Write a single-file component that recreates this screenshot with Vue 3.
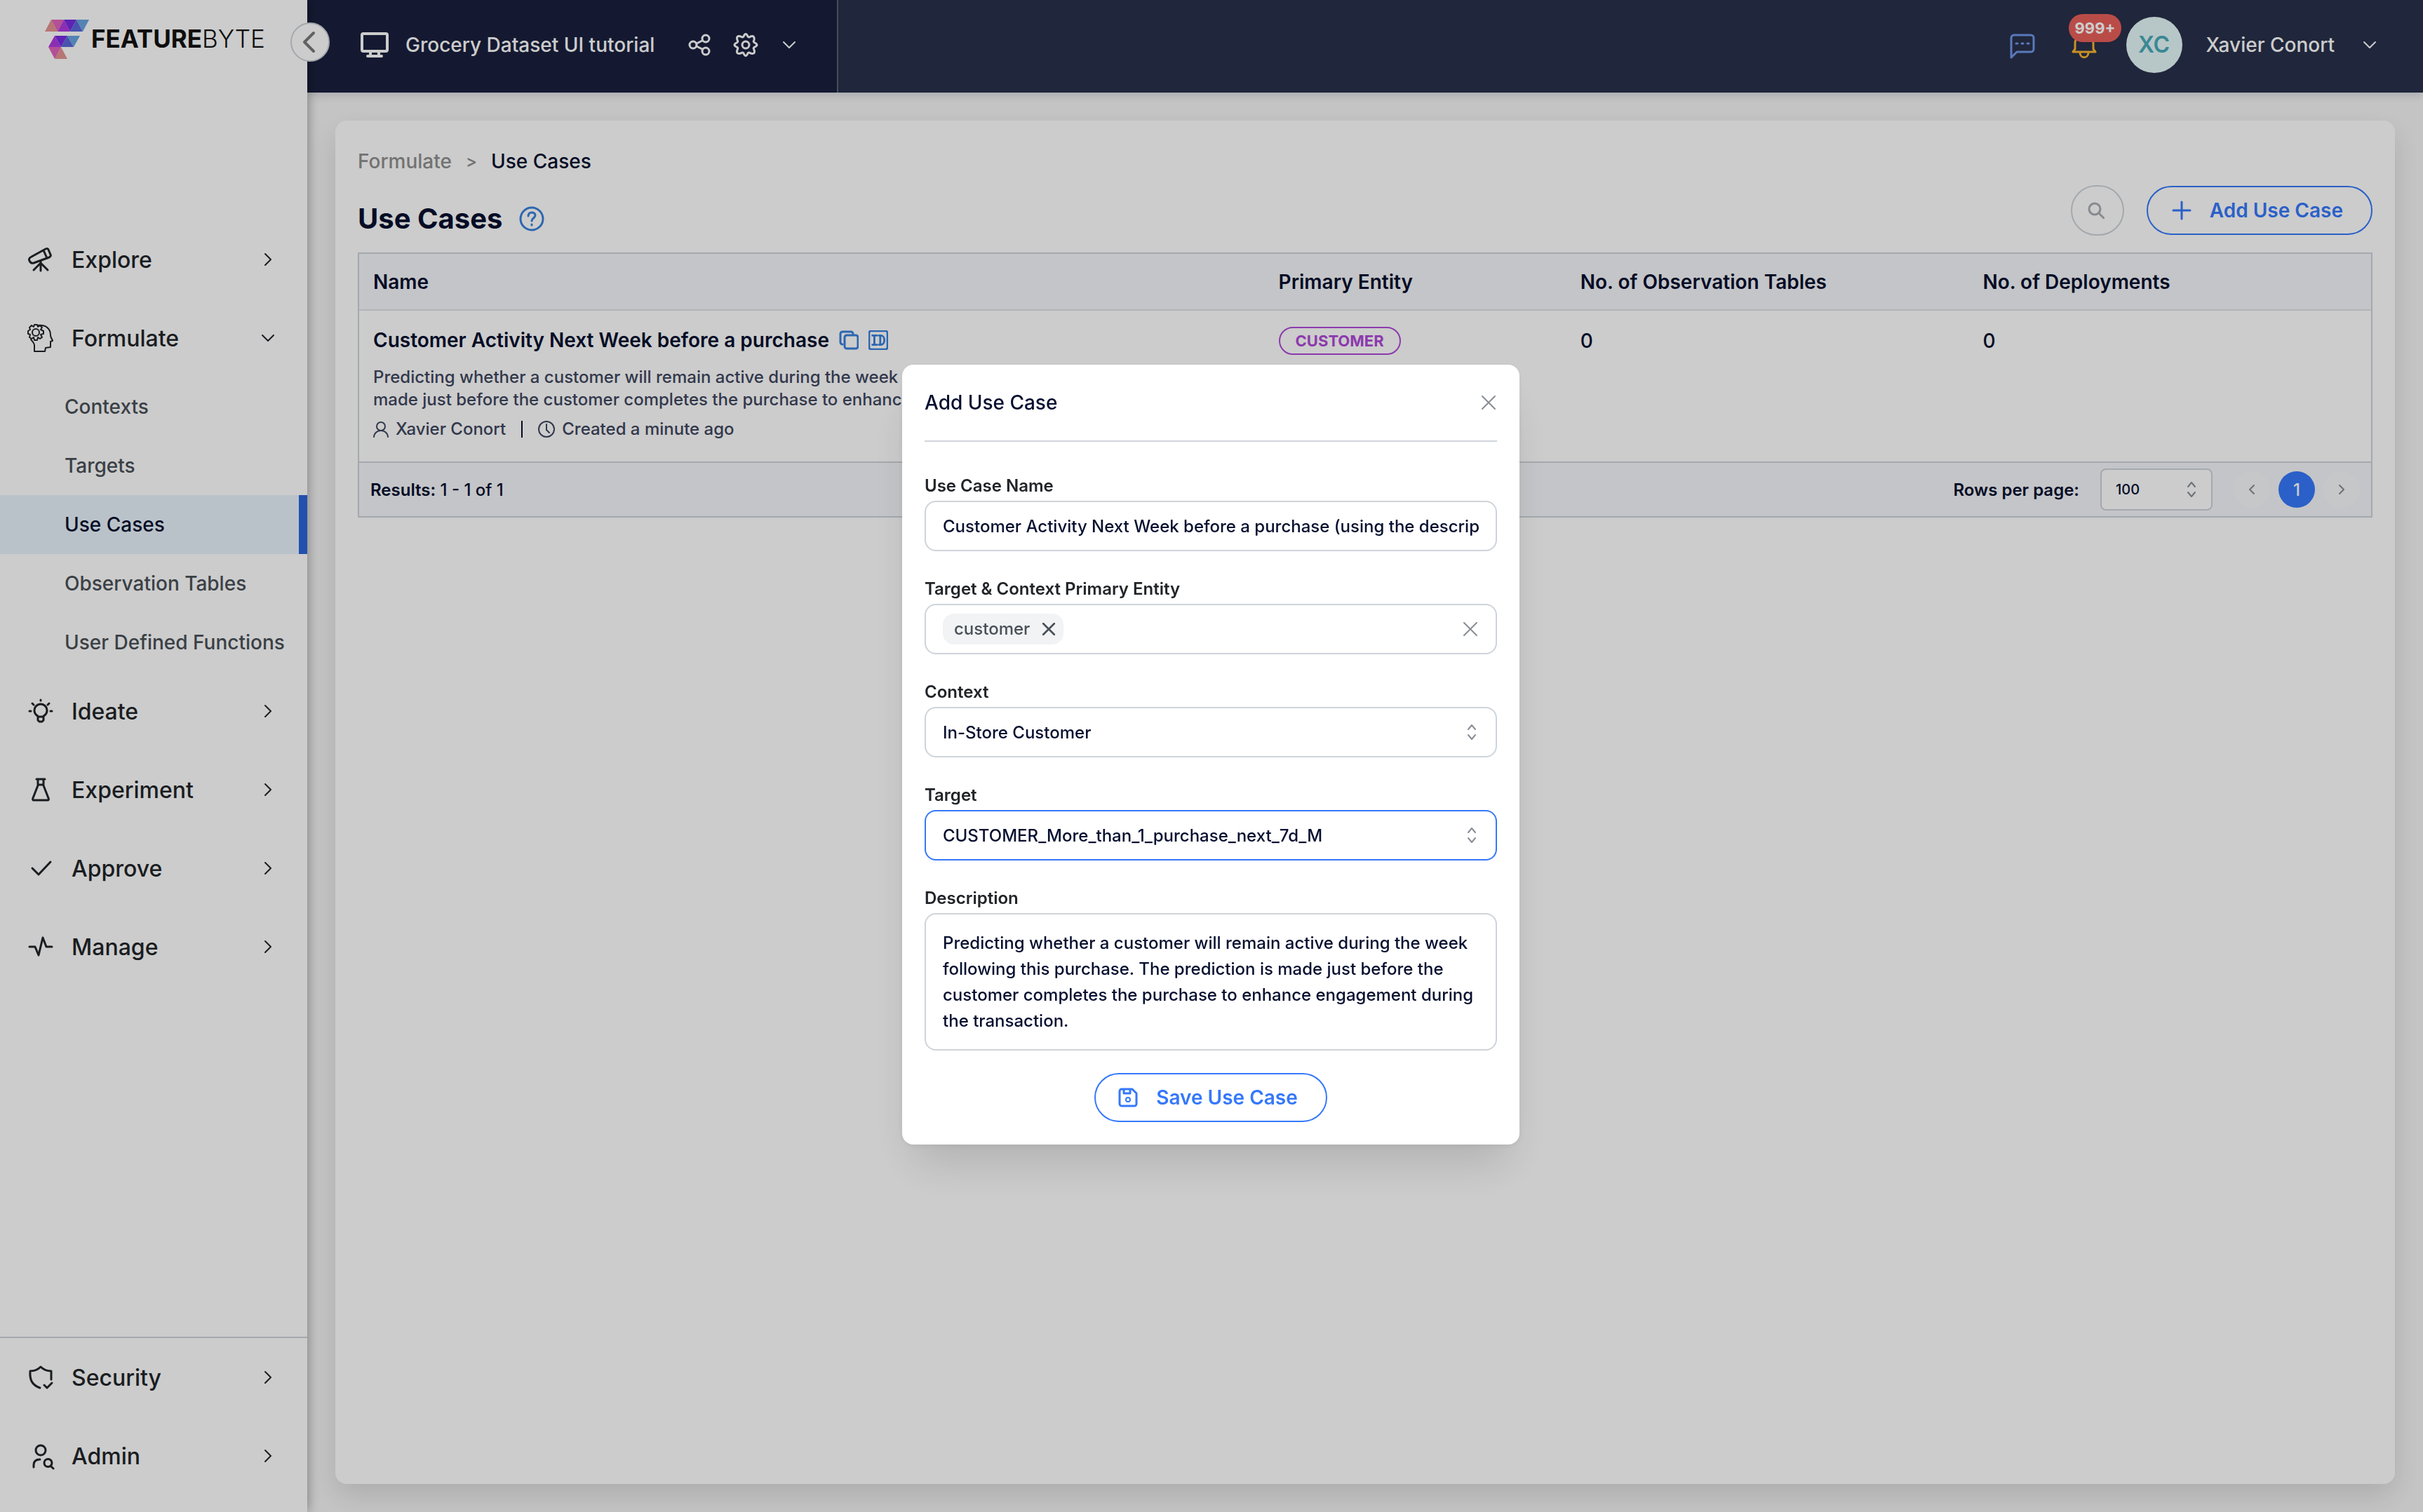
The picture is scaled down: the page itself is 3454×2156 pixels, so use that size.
<template>
  <div class="layout">
    <!-- Sidebar -->
    <aside class="sidebar">
      <a href="#" class="logo">
        <svg class="logo-mark" viewBox="0 0 64 56">
          <path fill="#e59491" d="M9 0 18 17H0zM23 39 32 56H14z" />
          <path fill="#e065bc" d="M9 0H27L18 17zM5 39H23L14 56z" />
          <path fill="#b03ae0" d="M27 0 36 17H18zM14 23 23 39H5z" />
          <path fill="#762ce0" d="M27 0H45L36 17zM14 23H32L23 39z" />
          <path fill="#5a68da" d="M45 0 54 17H36zM32 23 41 39H23z" />
          <path fill="#68a5e0" d="M45 0H63L54 17zM32 23H50L41 39z" />
        </svg>
        <span class="logo-text"><b>FEATURE</b>BYTE</span>
      </a>
      <button type="button" class="collapse-btn" aria-label="Collapse menu">
        <svg viewBox="0 0 32 32"><path d="M21 3 8 16l13 13" /></svg>
      </button>

      <nav class="menu">
        <template v-for="item in mainMenu" :key="item.label">
          <button type="button" class="menu-item">
            <svg class="menu-icon" :class="{ thin: item.thin }" viewBox="0 0 40 40">
              <path v-for="d in item.paths" :key="d" :d="d" />
            </svg>
            <span class="menu-label">{{ item.label }}</span>
            <svg class="chevron" viewBox="0 0 24 24">
              <path :d="item.children ? 'M4 8l8 8 8-8' : 'M8 4l8 8-8 8'" />
            </svg>
          </button>
          <div v-if="item.children" class="submenu">
            <a
              v-for="child in item.children"
              :key="child"
              href="#"
              class="submenu-item"
              :class="{ active: child === activePage }"
            >{{ child }}</a>
          </div>
        </template>
      </nav>

      <nav class="menu menu-bottom">
        <button v-for="item in bottomMenu" :key="item.label" type="button" class="menu-item">
          <svg class="menu-icon" viewBox="0 0 40 40">
            <path v-for="d in item.paths" :key="d" :d="d" />
          </svg>
          <span class="menu-label">{{ item.label }}</span>
          <svg class="chevron" viewBox="0 0 24 24"><path d="M8 4l8 8-8 8" /></svg>
        </button>
      </nav>
    </aside>

    <div class="content">
      <!-- Header -->
      <header class="header">
        <div class="project">
          <svg class="icon-monitor" viewBox="0 0 40 36">
            <path d="M4 2h32a2 2 0 0 1 2 2v21a2 2 0 0 1-2 2H4a2 2 0 0 1-2-2V4a2 2 0 0 1 2-2zM14 28v5M26 28v5M10 34h20" />
          </svg>
          <span class="project-name">Grocery Dataset UI tutorial</span>
          <button type="button" class="icon-btn share" aria-label="Share">
            <svg viewBox="0 0 32 32">
              <circle cx="7" cy="16" r="5" /><circle cx="25" cy="7" r="5" /><circle cx="25" cy="25" r="5" />
              <path d="M12 14l8-4M12 18l8 4" />
            </svg>
          </button>
          <button type="button" class="icon-btn gear" aria-label="Settings">
            <svg viewBox="0 0 36 36">
              <circle cx="18" cy="18" r="5" />
              <path d="M15 6Q18 -1 21 6Q22 8 25 6Q31 4 30 11Q28 14 31 15Q37 18 31 21Q28 22 30 25Q32 32 25 30Q22 28 21 30Q18 37 15 30Q14 28 11 30Q4 32 6 25Q8 22 5 21Q-1 18 5 15Q8 14 6 11Q4 4 11 6Q14 8 15 6z" />
            </svg>
          </button>
          <button type="button" class="icon-btn down" aria-label="Switch catalog">
            <svg viewBox="0 0 24 24"><path d="M4 8l8 8 8-8" /></svg>
          </button>
        </div>
        <div class="account">
          <button type="button" class="icon-btn chat" aria-label="Messages">
            <svg viewBox="0 0 36 36">
              <path d="M6 2h24a4 4 0 0 1 4 4v16a4 4 0 0 1-4 4H10l-8 8V6a4 4 0 0 1 4-4zM9 14h2M17 14h2M25 14h2" />
            </svg>
          </button>
          <button type="button" class="icon-btn bell" aria-label="Notifications">
            <svg viewBox="0 0 36 36">
              <path d="M2 26l3-4V14C5 6 11 2 18 2s13 4 13 12v8l3 4zM12 27c0 9 12 9 12 0" />
            </svg>
            <span class="badge">999+</span>
          </button>
          <span class="avatar">XC</span>
          <span class="user-name">Xavier Conort</span>
          <button type="button" class="icon-btn down" aria-label="Account menu">
            <svg viewBox="0 0 24 24"><path d="M4 8l8 8 8-8" /></svg>
          </button>
        </div>
      </header>

      <!-- Page -->
      <main class="card">
        <div class="breadcrumb">
          <a href="#">Formulate</a>
          <span class="sep">&gt;</span>
          <span class="current">Use Cases</span>
        </div>
        <div class="title-row">
          <h1>
            Use Cases
            <svg class="icon-help" viewBox="0 0 36 36">
              <circle cx="18" cy="18" r="16" />
              <path d="M13 14c0-7 10-6 10-1 0 4-5 4-5 8M18 26v1" />
            </svg>
          </h1>
          <button type="button" class="search-btn" aria-label="Search">
            <svg viewBox="0 0 24 24"><circle cx="10" cy="10" r="8" /><path d="M16 16l7 7" /></svg>
          </button>
          <button type="button" class="outline-btn add-btn">
            <svg viewBox="0 0 28 28"><path d="M14 2v24M2 14h24" /></svg>
            Add Use Case
          </button>
        </div>

        <div class="table-box">
          <table>
            <thead>
              <tr>
                <th class="col-name">Name</th>
                <th class="col-entity">Primary Entity</th>
                <th class="col-count">No. of Observation Tables</th>
                <th>No. of Deployments</th>
              </tr>
            </thead>
            <tbody>
              <tr v-for="row in rows" :key="row.name">
                <td>
                  <div class="row-name">
                    <span>{{ row.name }}</span>
                    <svg class="icon-copy" viewBox="0 0 28 28">
                      <path d="M5 20a3 3 0 0 1-3-3V5a3 3 0 0 1 3-3h12a3 3 0 0 1 3 3" />
                      <rect x="8" y="7" width="19" height="19" rx="3" />
                    </svg>
                    <svg class="icon-id" viewBox="0 0 30 30">
                      <rect x="1" y="1" width="28" height="28" rx="3" />
                      <path d="M6 8h7M9 8v14M6 22h7M18 8v14M16 8h3c7 0 7 14 0 14h-3" />
                    </svg>
                  </div>
                  <p class="row-desc">{{ row.description }}</p>
                  <div class="row-meta">
                    <svg class="icon-person" viewBox="0 0 22 24">
                      <circle cx="11" cy="8" r="6" /><path d="M1 23c1-12 19-12 20 0" />
                    </svg>
                    <span>{{ row.author }}</span>
                    <i class="bar"></i>
                    <svg class="icon-clock" viewBox="0 0 24 24">
                      <circle cx="12" cy="12" r="11" /><path d="M12 5v8l4 4" />
                    </svg>
                    <span>{{ row.created }}</span>
                  </div>
                </td>
                <td><span class="tag">{{ row.entity }}</span></td>
                <td class="count">{{ row.tables }}</td>
                <td class="count">{{ row.deployments }}</td>
              </tr>
            </tbody>
          </table>
          <div class="table-footer">
            <span class="results"><b>Results:</b> 1 - 1 of 1</span>
            <label class="rows-label" for="rows">Rows per page:</label>
            <div class="select-box rows-select">
              <select id="rows" v-model="rowsPerPage">
                <option>50</option>
                <option>100</option>
              </select>
              <svg class="icon-updown" viewBox="0 0 16 24"><path d="M3 8l5-6 5 6M3 16l5 6 5-6" /></svg>
            </div>
            <div class="pager">
              <button type="button" aria-label="Previous page">
                <svg viewBox="0 0 20 20"><path d="M13 4l-6 6 6 6" /></svg>
              </button>
              <button type="button" class="current-page">1</button>
              <button type="button" aria-label="Next page">
                <svg viewBox="0 0 20 20"><path d="M7 4l6 6-6 6" /></svg>
              </button>
            </div>
          </div>
        </div>
      </main>
    </div>

    <!-- Modal -->
    <div v-if="showModal" class="overlay">
      <form class="modal" role="dialog" aria-labelledby="modal-title" @submit.prevent="showModal = false">
        <div class="modal-header">
          <h2 id="modal-title">Add Use Case</h2>
          <button type="button" class="close-btn" aria-label="Close" @click="showModal = false">
            <svg viewBox="0 0 20 20"><path d="M1 1l18 18M19 1 1 19" /></svg>
          </button>
        </div>

        <div class="form-group">
          <label for="name">Use Case Name</label>
          <input id="name" v-model="form.name" type="text" class="control">
        </div>
        <div class="form-group">
          <label for="entity">Target &amp; Context Primary Entity</label>
          <div class="control tags">
            <span v-for="entity in form.entities" :key="entity" class="chip">
              {{ entity }}
              <button type="button" :aria-label="'Remove ' + entity" @click="removeEntity(entity)">
                <svg viewBox="0 0 20 20"><path d="M1 1l18 18M19 1 1 19" /></svg>
              </button>
            </span>
            <input id="entity" type="text" class="tag-input">
            <button type="button" class="close-btn" aria-label="Clear" @click="form.entities = []">
              <svg viewBox="0 0 20 20"><path d="M1 1l18 18M19 1 1 19" /></svg>
            </button>
          </div>
        </div>
        <div class="form-group">
          <label for="context">Context</label>
          <div class="select-box">
            <select id="context" v-model="form.context" class="control">
              <option>In-Store Customer</option>
            </select>
            <svg class="icon-updown" viewBox="0 0 16 24"><path d="M3 8l5-6 5 6M3 16l5 6 5-6" /></svg>
          </div>
        </div>
        <div class="form-group">
          <label for="target">Target</label>
          <div class="select-box">
            <select id="target" v-model="form.target" class="control focused">
              <option>CUSTOMER_More_than_1_purchase_next_7d_M</option>
            </select>
            <svg class="icon-updown" viewBox="0 0 16 24"><path d="M3 8l5-6 5 6M3 16l5 6 5-6" /></svg>
          </div>
        </div>
        <div class="form-group">
          <label for="description">Description</label>
          <textarea id="description" v-model="form.description" class="control" rows="4"></textarea>
        </div>

        <button type="submit" class="outline-btn save-btn">
          <svg viewBox="0 0 28 28">
            <path d="M5 2h15l6 6v15a3 3 0 0 1-3 3H5a3 3 0 0 1-3-3V5a3 3 0 0 1 3-3zM8 2v6h9V2" />
            <circle cx="14" cy="17" r="3" />
          </svg>
          Save Use Case
        </button>
      </form>
    </div>
  </div>
</template>

<script setup>
import { reactive, ref } from "vue";

const description =
  "Predicting whether a customer will remain active during the week following this purchase. The prediction is made just before the customer completes the purchase to enhance engagement during the transaction.";

// Sidebar
const activePage = ref("Use Cases");
const mainMenu = [
  {
    label: "Explore",
    paths: [
      "M27 5 7 16c-4 2-4 4-3 6s3 4 6 3l22-8c2-1 3-2 2-4l-3-7c-1-2-2-2-4-1z",
      "M24 7l5 11M20 22v14M20 25 10 35M20 25l10 10",
    ],
  },
  {
    label: "Formulate",
    thin: true,
    paths: [
      "M11 1h4l1 3 3-2 3 3-2 3 4 2v4l-4 1 2 4-3 2-3-2-1 4h-4l-1-4-3 2-3-2 1-4-3-1v-4l3-2-1-3 3-3 3 2z",
      "M8 12a5 5 0 1 0 10 0a5 5 0 1 0-10 0",
      "M16 2c11-1 18 4 18 14 0 4 3 6 3 8l-3 1v8l-7 1-1 5H11V30c0-3-3-5-5-8",
    ],
    children: ["Contexts", "Targets", "Use Cases", "Observation Tables", "User Defined Functions"],
  },
  {
    label: "Ideate",
    paths: [
      "M16 29v-2a9 9 0 1 1 8 0v2M16 28h8v5l-2 2h-4l-2-2z",
      "M20 4v1M4 20h2M34 20h2M8 9l2 2M32 9l-2 2",
    ],
  },
  { label: "Experiment", paths: ["M14 5h12M16 5v9L9 32c-1 2 0 3 1 3h20c1 0 2-1 1-3L24 14V5M16 13h8"] },
  { label: "Approve", paths: ["M8 20l9 9 17-18"] },
  { label: "Manage", paths: ["M4 20h8l5 12 6-25 5 13h8"] },
];
const bottomMenu = [
  {
    label: "Security",
    paths: ["M19 35C8 31 4 24 5 11c6 0 10-1 15-6 4 4 9 6 15 6v12", "M25 31l4 4 7-7"],
  },
  {
    label: "Admin",
    paths: [
      "M13 12a7 7 0 1 0 14 0a7 7 0 1 0-14 0",
      "M10 36v-3c0-5 3-8 9-8",
      "M25 30a5 5 0 1 0 11 0a5 5 0 1 0-11 0M34 34l4 4",
    ],
  },
];

// Table
const rowsPerPage = ref("100");
const rows = ref([
  {
    name: "Customer Activity Next Week before a purchase",
    description,
    author: "Xavier Conort",
    created: "Created a minute ago",
    entity: "CUSTOMER",
    tables: 0,
    deployments: 0,
  },
]);

// Form
const showModal = ref(true);
const form = reactive({
  name: "Customer Activity Next Week before a purchase (using the description)",
  entities: ["customer"],
  context: "In-Store Customer",
  target: "CUSTOMER_More_than_1_purchase_next_7d_M",
  description,
});
const removeEntity = (entity) => {
  form.entities = form.entities.filter((e) => e !== entity);
};
</script>

<style>
body {
  margin: 0;
  background: #f6f6f6;
}
</style>

<style scoped>
* {
  box-sizing: border-box;
}
.layout {
  display: flex;
  min-height: 100vh;
  background: #f6f6f6;
  color: #060f2f;
  font-family: Inter, sans-serif;
  font-size: 28px;
  font-weight: 500;
}
button,
input,
select,
textarea {
  margin: 0;
  padding: 0;
  border: none;
  background: none;
  color: inherit;
  font: inherit;
  outline: none;
}
button {
  cursor: pointer;
}
a {
  color: inherit;
  text-decoration: none;
}
svg {
  display: block;
  flex: none;
  fill: none;
  stroke: currentColor;
  stroke-width: 3;
  stroke-linecap: round;
  stroke-linejoin: round;
}
h1,
h2,
p {
  margin: 0;
}

/* Sidebar */
.sidebar {
  position: relative;
  z-index: 2;
  display: flex;
  flex-direction: column;
  flex: none;
  width: 438px;
  background: #fff;
  color: #212529;
  box-shadow: 0 0 16px rgba(0, 0, 0, 0.4);
}
.logo {
  display: flex;
  gap: 2px;
  height: 314px;
  padding: 28px 0 0 64px;
}
.logo-mark {
  width: 64px;
  height: 56px;
  stroke: none;
}
.logo-text {
  color: #121212;
  font-size: 35px;
  font-weight: 300;
  line-height: 54px;
}
.logo-text b {
  font-weight: 700;
}
.collapse-btn {
  position: absolute;
  top: 32px;
  right: -32px;
  display: flex;
  align-items: center;
  justify-content: center;
  width: 56px;
  height: 56px;
  border: 2px solid #ced4da;
  border-radius: 50%;
  background: #fff;
  color: #7a7a7a;
}
.collapse-btn svg {
  width: 32px;
  height: 32px;
  stroke-width: 4;
}
.menu {
  display: flex;
  flex-direction: column;
}
.menu-item {
  display: flex;
  align-items: center;
  gap: 24px;
  height: 112px;
  padding: 0 44px 0 38px;
  font-size: 32px;
  text-align: left;
}
.menu-icon {
  width: 40px;
  height: 40px;
}
.menu-icon.thin {
  stroke-width: 2;
}
.menu-label {
  flex: 1;
}
.chevron {
  width: 24px;
  height: 24px;
  stroke-width: 2;
}
.submenu-item {
  display: block;
  padding-left: 92px;
  color: #495057;
  line-height: 84px;
}
.submenu-item.active {
  border-right: 12px solid #2a64da;
  background: #e9f3fc;
  color: #060f2f;
}
.menu-bottom {
  margin-top: auto;
  padding-bottom: 24px;
  border-top: 2px solid #ced4da;
}

/* Header */
.content {
  display: flex;
  flex: 1;
  flex-direction: column;
  min-width: 0;
}
.header {
  display: flex;
  justify-content: space-between;
  height: 132px;
  background: #28304a;
  color: #fff;
  box-shadow: 0 4px 12px rgba(20, 30, 70, 0.15);
}
.project,
.account {
  display: flex;
  align-items: center;
  padding-bottom: 4px;
}
.project {
  padding-left: 76px;
  padding-right: 56px;
  border-right: 2px solid #5a6074;
  background: #1a203e;
}
.icon-monitor {
  width: 40px;
  height: 36px;
  margin-right: 24px;
  stroke-width: 4;
}
.icon-btn svg {
  width: 100%;
}
.share {
  width: 32px;
  margin-left: 48px;
}
.gear {
  width: 36px;
  margin: 0 32px;
}
.down {
  width: 24px;
}
.down svg {
  stroke-width: 2;
}
.account {
  padding-right: 64px;
}
.chat,
.bell {
  width: 36px;
  padding-top: 4px;
}
.chat {
  color: #7098ec;
}
.bell {
  position: relative;
  margin: 0 42px 0 52px;
  color: #fab52d;
}
.badge {
  position: absolute;
  top: -24px;
  left: -4px;
  padding: 0 9px;
  border-radius: 20px;
  background: #e9605a;
  color: #fff;
  font-size: 22px;
  font-weight: 700;
  line-height: 40px;
}
.avatar {
  width: 80px;
  border-radius: 50%;
  background: #e5f9fb;
  color: #4aaaba;
  font-size: 32px;
  font-weight: 600;
  line-height: 80px;
  text-align: center;
}
.user-name {
  margin: 0 38px 0 34px;
}

/* Page */
.card {
  flex: 1;
  margin: 40px;
  padding: 36px 32px;
  border-radius: 16px;
  background: #fff;
  box-shadow: 0 16px 40px rgba(0, 0, 0, 0.12);
}
.breadcrumb {
  display: flex;
  line-height: 44px;
}
.breadcrumb a {
  color: #8f8f8f;
}
.sep {
  margin: 0 20px;
  color: #8f8f8f;
  font-size: 24px;
}
.title-row {
  display: flex;
  align-items: center;
  gap: 32px;
  margin: 12px 0 24px;
}
h1 {
  display: flex;
  align-items: center;
  align-self: flex-end;
  gap: 24px;
  flex: 1;
  font-size: 40px;
  font-weight: 700;
  line-height: 48px;
}
.icon-help {
  width: 36px;
  height: 36px;
  color: #3780dc;
}
.search-btn {
  display: flex;
  align-items: center;
  justify-content: center;
  width: 76px;
  height: 72px;
  padding-right: 4px;
  border: 2px solid #ced4da;
  border-radius: 36px;
  color: #a9adb5;
}
.search-btn svg {
  width: 24px;
  height: 24px;
}
.outline-btn {
  display: flex;
  align-items: center;
  gap: 26px;
  height: 70px;
  padding: 0 40px 0 34px;
  border: 2px solid #3578fa;
  border-radius: 35px;
  color: #3578fa;
  font-weight: 600;
}
.outline-btn svg {
  width: 28px;
  height: 28px;
}

/* Table */
.table-box {
  border: 2px solid #ced4da;
}
table {
  width: 100%;
  border-collapse: collapse;
  table-layout: fixed;
}
th {
  height: 80px;
  padding: 0 20px;
  border-bottom: 2px solid #dce1e5;
  background: #f5f7fa;
  font-weight: 600;
  text-align: left;
}
td {
  padding: 23px 20px 30px;
  vertical-align: top;
}
.col-name {
  width: 45%;
}
.col-entity {
  width: 15%;
}
.col-count {
  width: 20%;
}
.row-name {
  display: flex;
  align-items: center;
  gap: 14px;
  font-weight: 600;
  line-height: 38px;
}
.row-name svg {
  width: 28px;
  height: 28px;
  color: #3780dc;
}
.row-desc {
  margin: 18px 0 10px;
  max-width: 1240px;
  color: #3e465e;
  font-size: 24px;
  line-height: 32px;
}
.row-meta {
  display: flex;
  align-items: center;
  gap: 10px;
  color: #3e465e;
  font-size: 24px;
  line-height: 32px;
}
.row-meta svg {
  height: 24px;
  stroke-width: 2;
}
.icon-person {
  width: 22px;
}
.icon-clock {
  width: 24px;
}
.bar {
  width: 2px;
  height: 24px;
  margin: 0 12px;
  background: #060f2f;
}
.tag {
  display: inline-block;
  height: 40px;
  padding: 0 22px;
  border: 2px solid #b049d9;
  border-radius: 20px;
  color: #b049d9;
  font-size: 22px;
  font-weight: 700;
  line-height: 36px;
}
.count {
  line-height: 40px;
}
.table-footer {
  display: flex;
  align-items: center;
  height: 78px;
  padding: 0 16px;
  border-top: 2px solid #ced4da;
  background: #f5f7fa;
  font-size: 24px;
}
.table-footer b,
.rows-label {
  font-weight: 600;
}
.results {
  flex: 1;
}
.select-box {
  position: relative;
}
select {
  width: 100%;
  appearance: none;
}
.icon-updown {
  position: absolute;
  top: 50%;
  right: 28px;
  width: 16px;
  height: 24px;
  transform: translateY(-50%);
  color: #868e96;
  stroke-width: 2;
  pointer-events: none;
}
.rows-select {
  width: 160px;
  margin: 0 30px;
  font-size: 20px;
}
.rows-select select {
  height: 60px;
  padding: 0 20px;
  border: 2px solid #ced4da;
  border-radius: 8px;
  background: #fff;
}
.rows-select .icon-updown {
  right: 22px;
}
.pager {
  display: flex;
  gap: 12px;
}
.pager button {
  display: flex;
  align-items: center;
  justify-content: center;
  width: 52px;
  height: 52px;
  border-radius: 50%;
  background: #f8f9fa;
  color: #868e96;
}
.pager svg {
  width: 20px;
  height: 20px;
  stroke-width: 2;
}
.pager .current-page {
  background: #3578fa;
  color: #fff;
}

/* Modal */
.overlay {
  position: fixed;
  inset: 0;
  z-index: 10;
  display: flex;
  align-items: center;
  justify-content: center;
  padding: 0 2px 4px 0;
  background: rgba(0, 0, 0, 0.2);
}
.modal {
  width: 880px;
  max-width: 100%;
  padding: 32px;
  border-radius: 16px;
  background: #fff;
  box-shadow: 0 40px 60px -16px rgba(0, 0, 0, 0.14), 0 2px 8px rgba(0, 0, 0, 0.06);
  font-size: 24px;
}
.modal-header {
  display: flex;
  align-items: center;
  justify-content: space-between;
  padding-bottom: 32px;
  margin-bottom: 45px;
  border-bottom: 2px solid #ced4da;
}
h2 {
  font-size: 28px;
  font-weight: 500;
  line-height: 44px;
}
.close-btn {
  color: #868e96;
}
.close-btn svg {
  width: 20px;
  height: 20px;
  margin-right: 2px;
  stroke-width: 2;
}
.form-group {
  display: flex;
  flex-direction: column;
  gap: 3px;
  margin-bottom: 36px;
}
.form-group label {
  color: #212529;
  font-weight: 600;
  line-height: 36px;
}
.control {
  width: 100%;
  height: 72px;
  padding: 0 24px;
  border: 2px solid #ced4da;
  border-radius: 16px;
  background: #fff;
}
.control.focused {
  border-color: #3578fa;
}
.tags {
  display: flex;
  align-items: center;
  gap: 16px;
}
.tag-input {
  flex: 1;
  min-width: 0;
}
.chip {
  display: flex;
  align-items: center;
  gap: 18px;
  padding: 0 12px 0 16px;
  border-radius: 16px;
  background: #f1f3f5;
  color: #495057;
  line-height: 44px;
}
.chip svg {
  width: 18px;
  height: 18px;
}
.outline-btn circle {
  stroke-width: 2;
}
textarea.control {
  display: block;
  height: auto;
  padding: 22px 24px;
  line-height: 37px;
  resize: none;
}
.save-btn {
  height: 70px;
  margin: -4px auto 0;
  padding: 0 40px 0 32px;
  font-size: 28px;
}
</style>
